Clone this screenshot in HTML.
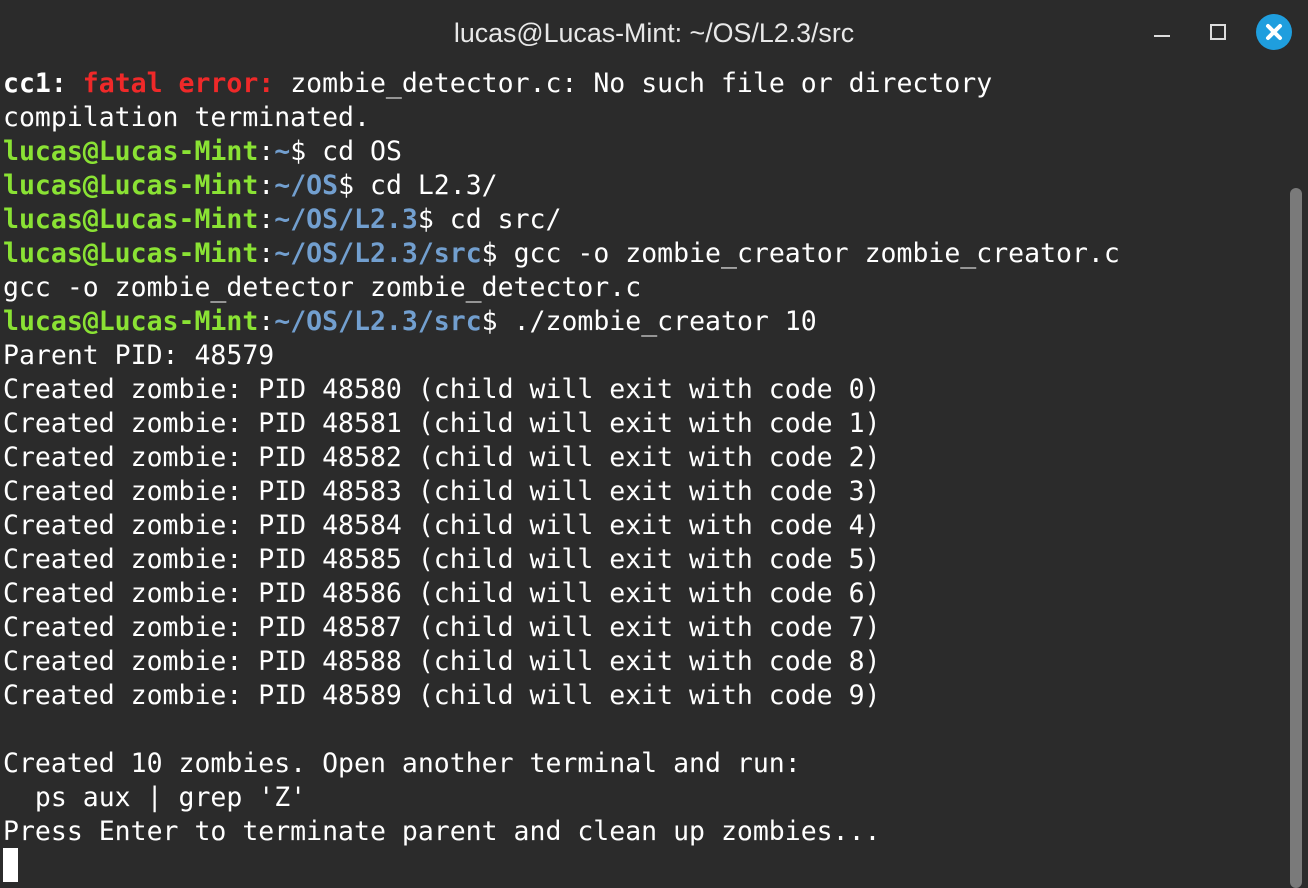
<!DOCTYPE html>
<html><head><style>
html,body{margin:0;padding:0;width:1308px;height:884px;overflow:hidden;background:#2b2b2b;}
.title{position:absolute;left:0;top:0;width:1308px;height:66px;text-align:center;font-family:"Liberation Sans","DejaVu Sans",sans-serif;font-size:26.8px;color:#e8e8e8;line-height:66px;}
.term{position:absolute;left:3px;top:67px;font-family:"DejaVu Sans Mono",monospace;font-size:26.5px;line-height:34px;color:#ffffff;white-space:pre;}
.g{color:#8ae234;font-weight:bold}.b{color:#729fcf;font-weight:bold}.r{color:#ef2929;font-weight:bold}.w{font-weight:bold}
.cur{display:inline-block;width:15px;height:34px;background:#fff;vertical-align:top}
</style></head><body>
<div class="title">lucas@Lucas-Mint: ~/OS/L2.3/src</div>
<div style="position:absolute;left:1154px;top:35px;width:16px;height:2px;background:#ddd"></div>
<div style="position:absolute;left:1210px;top:24px;width:12px;height:12px;border:2px solid #ddd"></div>
<svg style="position:absolute;left:1256px;top:14px" width="36" height="36"><circle cx="18" cy="18" r="18" fill="#1f9ede"/><path d="M12 12L24 24M24 12L12 24" stroke="#fff" stroke-width="4" stroke-linecap="round"/></svg>
<div style="position:absolute;left:1290px;top:188px;width:12px;height:700px;background:#7a7a7a;border-radius:6px"></div>
<div class="term"><span class="w">cc1: </span><span class="r">fatal error: </span>zombie_detector.c: No such file or directory
compilation terminated.
<span class="g">lucas@Lucas-Mint</span>:<span class="b">~</span>$ cd OS
<span class="g">lucas@Lucas-Mint</span>:<span class="b">~/OS</span>$ cd L2.3/
<span class="g">lucas@Lucas-Mint</span>:<span class="b">~/OS/L2.3</span>$ cd src/
<span class="g">lucas@Lucas-Mint</span>:<span class="b">~/OS/L2.3/src</span>$ gcc -o zombie_creator zombie_creator.c
gcc -o zombie_detector zombie_detector.c
<span class="g">lucas@Lucas-Mint</span>:<span class="b">~/OS/L2.3/src</span>$ ./zombie_creator 10
Parent PID: 48579
Created zombie: PID 48580 (child will exit with code 0)
Created zombie: PID 48581 (child will exit with code 1)
Created zombie: PID 48582 (child will exit with code 2)
Created zombie: PID 48583 (child will exit with code 3)
Created zombie: PID 48584 (child will exit with code 4)
Created zombie: PID 48585 (child will exit with code 5)
Created zombie: PID 48586 (child will exit with code 6)
Created zombie: PID 48587 (child will exit with code 7)
Created zombie: PID 48588 (child will exit with code 8)
Created zombie: PID 48589 (child will exit with code 9)

Created 10 zombies. Open another terminal and run:
  ps aux | grep 'Z'
Press Enter to terminate parent and clean up zombies...
<span class="cur" style="margin-top:-1px"></span></div>
</body></html>
